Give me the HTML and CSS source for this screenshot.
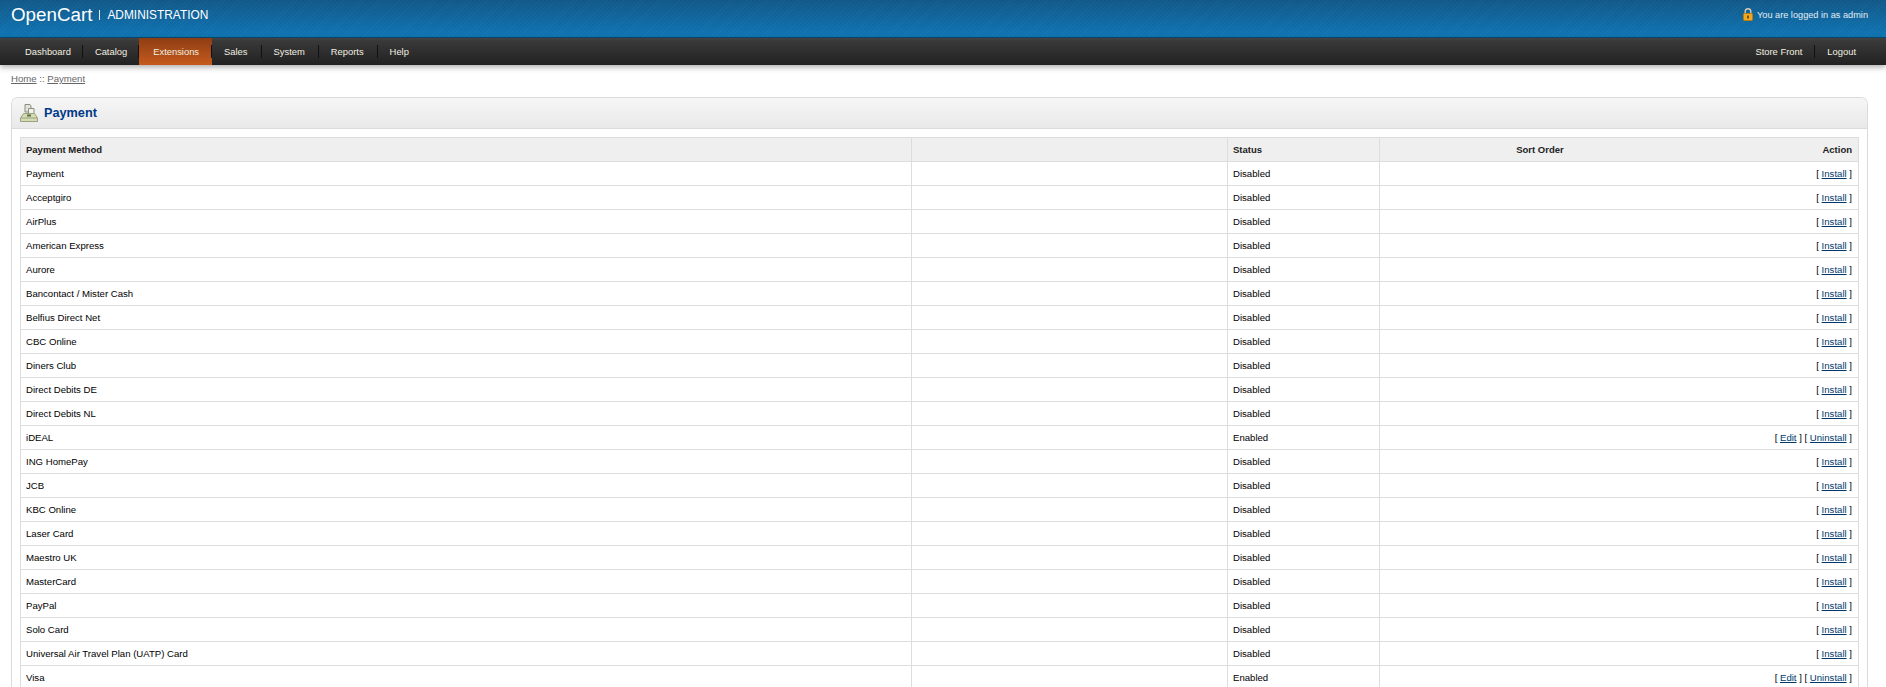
FILE: index.html
```html
<!DOCTYPE html>
<html lang="en">
<head>
<meta charset="utf-8">
<title>Payment</title>
<link rel="stylesheet" href="styles.css">
</head>
<body>
<header class="top">
  <div class="brand"><span class="logo">OpenCart</span><span class="admin">ADMINISTRATION</span></div>
  <div class="logged">
    <svg class="lock" width="10" height="13" viewBox="0 0 10 13"><path d="M2.200 6V3.500a2.800 2.800 0 0 1 5.600 0V6" fill="none" stroke="#cfcabb" stroke-width="1.400"/><rect x="0.500" y="5.500" width="9" height="7" rx="1" fill="#f0a81e" stroke="#b97a10"/><rect x="4" y="7.500" width="2" height="3" fill="#7a5208"/></svg>
    <span>You are logged in as admin</span>
  </div>
</header>
<nav class="menu">
  <ul class="menu-left">
    <li><a href="#">Dashboard</a></li>
    <li><a href="#">Catalog</a></li>
    <li class="active"><a href="#">Extensions</a></li>
    <li><a href="#">Sales</a></li>
    <li><a href="#">System</a></li>
    <li><a href="#">Reports</a></li>
    <li><a href="#">Help</a></li>
  </ul>
  <ul class="menu-right">
    <li><a href="#">Store Front</a></li>
    <li><a href="#">Logout</a></li>
  </ul>
</nav>
<div class="crumbs"><a href="#">Home</a> :: <a href="#">Payment</a></div>
<main class="box">
  <div class="box-head">
    <svg class="pay-icon" width="18" height="18" viewBox="0 0 18 18">
      <path d="M5 .5h5l1 1.500v6H5z" fill="#e3e3dc" stroke="#8c8c80"/>
      <path d="M8.500 4.500h5.500v5H8.500z" fill="#f3f3ee" stroke="#8c8c80"/>
      <path d="M3.500 9.500h11l3 4.500v3.500H.5V14z" fill="#d4dcb4" stroke="#98a27c"/>
      <path d="M1 14h16" stroke="#98a27c"/>
      <rect x="7" y="10.500" width="4" height="2" fill="#5f6a48"/>
    </svg>
    <h1>Payment</h1>
  </div>
  <table class="list">
    <thead>
      <tr><th>Payment Method</th><th></th><th>Status</th><th class="center">Sort Order</th><th class="right">Action</th></tr>
    </thead>
    <tbody>
      <tr><td>Payment</td><td></td><td>Disabled</td><td></td><td class="right">[ <a href="#">Install</a> ]</td></tr>
      <tr><td>Acceptgiro</td><td></td><td>Disabled</td><td></td><td class="right">[ <a href="#">Install</a> ]</td></tr>
      <tr><td>AirPlus</td><td></td><td>Disabled</td><td></td><td class="right">[ <a href="#">Install</a> ]</td></tr>
      <tr><td>American Express</td><td></td><td>Disabled</td><td></td><td class="right">[ <a href="#">Install</a> ]</td></tr>
      <tr><td>Aurore</td><td></td><td>Disabled</td><td></td><td class="right">[ <a href="#">Install</a> ]</td></tr>
      <tr><td>Bancontact / Mister Cash</td><td></td><td>Disabled</td><td></td><td class="right">[ <a href="#">Install</a> ]</td></tr>
      <tr><td>Belfius Direct Net</td><td></td><td>Disabled</td><td></td><td class="right">[ <a href="#">Install</a> ]</td></tr>
      <tr><td>CBC Online</td><td></td><td>Disabled</td><td></td><td class="right">[ <a href="#">Install</a> ]</td></tr>
      <tr><td>Diners Club</td><td></td><td>Disabled</td><td></td><td class="right">[ <a href="#">Install</a> ]</td></tr>
      <tr><td>Direct Debits DE</td><td></td><td>Disabled</td><td></td><td class="right">[ <a href="#">Install</a> ]</td></tr>
      <tr><td>Direct Debits NL</td><td></td><td>Disabled</td><td></td><td class="right">[ <a href="#">Install</a> ]</td></tr>
      <tr><td>iDEAL</td><td></td><td>Enabled</td><td></td><td class="right">[ <a href="#">Edit</a> ] [ <a href="#">Uninstall</a> ]</td></tr>
      <tr><td>ING HomePay</td><td></td><td>Disabled</td><td></td><td class="right">[ <a href="#">Install</a> ]</td></tr>
      <tr><td>JCB</td><td></td><td>Disabled</td><td></td><td class="right">[ <a href="#">Install</a> ]</td></tr>
      <tr><td>KBC Online</td><td></td><td>Disabled</td><td></td><td class="right">[ <a href="#">Install</a> ]</td></tr>
      <tr><td>Laser Card</td><td></td><td>Disabled</td><td></td><td class="right">[ <a href="#">Install</a> ]</td></tr>
      <tr><td>Maestro UK</td><td></td><td>Disabled</td><td></td><td class="right">[ <a href="#">Install</a> ]</td></tr>
      <tr><td>MasterCard</td><td></td><td>Disabled</td><td></td><td class="right">[ <a href="#">Install</a> ]</td></tr>
      <tr><td>PayPal</td><td></td><td>Disabled</td><td></td><td class="right">[ <a href="#">Install</a> ]</td></tr>
      <tr><td>Solo Card</td><td></td><td>Disabled</td><td></td><td class="right">[ <a href="#">Install</a> ]</td></tr>
      <tr><td>Universal Air Travel Plan (UATP) Card</td><td></td><td>Disabled</td><td></td><td class="right">[ <a href="#">Install</a> ]</td></tr>
      <tr><td>Visa</td><td></td><td>Enabled</td><td></td><td class="right">[ <a href="#">Edit</a> ] [ <a href="#">Uninstall</a> ]</td></tr>
    </tbody>
  </table>
</main>
</body>
</html>
```
FILE: styles.css
```css
html { overflow: hidden; }
body { margin: 0; background: #fff; font: 9.600px/16px "Liberation Sans", Arial, sans-serif; color: #000; }
a { color: inherit; }
ul { list-style: none; margin: 0; padding: 0; display: flex; }

.top {
  height: 38px; display: flex; justify-content: space-between; align-items: center;
  padding: 0 18px 8px 11px; box-sizing: border-box; color: #fff;
  background:
    repeating-linear-gradient(135deg, rgba(255,255,255,.02) 0 1px, rgba(0,0,0,.02) 1px 3px),
    linear-gradient(#125a8a, #0f77b7);
  border-bottom: 1px solid #0a4a72;
}
.brand { display: flex; align-items: center; }
.logo { font-size: 18.800px; line-height: 24px; }
.admin { font-size: 11.900px; line-height: 10px; margin-left: 7px; padding-left: 7px; border-left: 1px solid #dfeaf2; }
.logged { display: flex; align-items: center; gap: 4px; font-size: 9.200px; color: #e2edf5; }

.menu {
  height: 27px; display: flex; justify-content: space-between; padding: 0 18px 0 13px;
  background: linear-gradient(#434343 0, #393939 3px, #212121 100%);
  box-shadow: 0 2px 6px rgba(0,0,0,.35);
  position: relative;
}
.menu li { display: flex; align-items: center; height: 100%; }
.menu a { display: block; padding: 0 12px; line-height: 13px; color: #f2efe0; font-size: 9.400px; text-decoration: none; border-right: 1px solid #111; }
.menu li:last-child a { border-right: 0; }
.menu-left li:nth-child(-n+2) a { padding-right: 11px; }
.menu-left li:nth-child(n+4) a { padding-right: 13px; }
.menu .active { background: linear-gradient(#8d3d14, #c65a1c); }
.menu .active a { padding-left: 14px; }

.crumbs { padding: 7px 11px 0; height: 25px; font-size: 9.600px; line-height: 14px; color: #666; }
.box { margin: 0 18px 0 11px; border: 1px solid #dbdbdb; border-bottom: 0; border-radius: 7px 7px 0 0; padding: 0 8px; }
.box-head {
  display: flex; align-items: center; gap: 6px; height: 30px; margin: 0 -8px 8px; padding-left: 8px;
  background: linear-gradient(#f6f6f6, #e9e9e9); border-bottom: 1px solid #dbdbdb; border-radius: 7px 7px 0 0;
}
h1 { margin: 0; font-size: 12.700px; font-weight: bold; color: #003a88; }
.list { width: 100%; border-collapse: collapse; table-layout: fixed; border: 1px solid #ddd; }
.list th, .list td { height: 23px; padding: 0 6px 0 5px; border-bottom: 1px solid #ddd; text-align: left; }
.list th { background: #efefef; color: #222; font-weight: bold; font-size: 9.500px; }
.list td { font-size: 9.600px; }
.list th:nth-child(1) { width: 879px; }
.list th:nth-child(2) { width: 304px; }
.list th:nth-child(3) { width: 140px; }
.list th:nth-child(4) { width: 310px; }
.list th:nth-child(-n+3), .list td:nth-child(-n+3) { border-right: 1px solid #ddd; }
.list .center { text-align: center; }
.list .right { text-align: right; }
.list td a { color: #003a6c; }
```
